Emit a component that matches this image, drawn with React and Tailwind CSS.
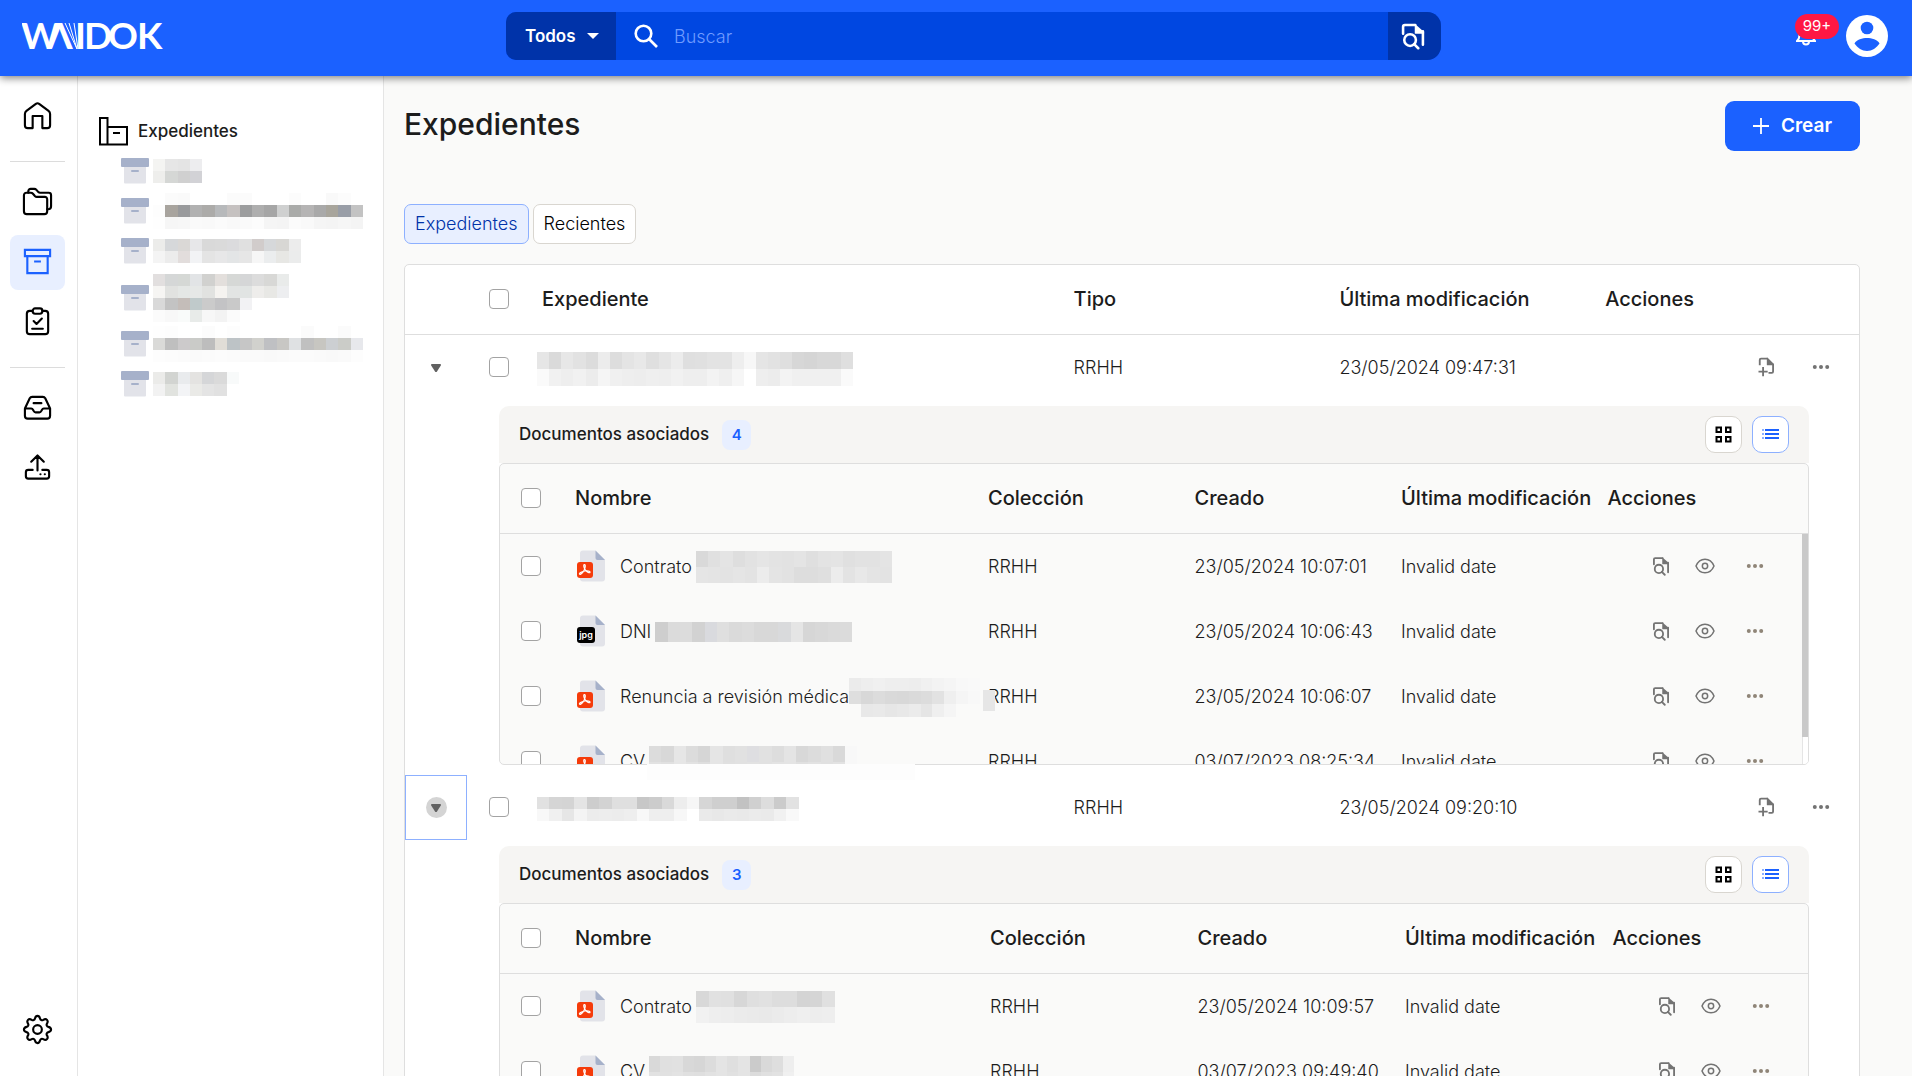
import React, { useState } from 'react'

const TREE = [
    { size: 'h-10', width: 'w-[49px]', rows: ['f4f4f2 e6e6e6 e4e4e4 ededef', 'eeeeec d5d7d5 d0d0d0 d2d2d6'] },
    {
        size: 'h-10', width: 'w-[210px]', rows: [
            '- fb fa - - - fb fb - - - fc - - f9 fc -',
            'fd a8a49e 999a9c b1 acaba9 b7b9bb c5c1c0 9c9d9e ae a6 cfd0d0 aaaba9 b5b4b4 a9 a8a59c 999ea7 c3',
            'fe f6 f7 fa f9 fb f9 fa fc f5 f4 fb f9 f5 f4 f6 f4',
        ],
    },
    { size: 'h-10', width: 'w-[148px]', rows: ['ececea d6d8da dad8d6 e7e7e9 d9 dadada dbdbdd e0 d1cccb d6d8da d8d7d4 ececec', 'f4f4f4 ececec e2dddc f2f3f5 e4 e7e7e8 e3e5e6 e6 f6 ebedee e7e7e4 ebecec'] },
    {
        size: 'h-[53px]', width: 'w-[136px]', rows: [
            'e2dfdf d5d7d7 d5d8d5 e2e4e6 d1d1cf e3dfdc d6d8d6 d5d6d7 dc d8d8d6 e9ebea',
            'f6f5f3 e1e2e0 e4e7e5 e6e8e7 e1e2e0 f5f3f0 e2e4e3 e1e4e3 eeedeb e8e8e5 edeef0',
            'd9d9d9 c3 c4bdb9 c0cacb cb c3c3c5 c9 f2f2f4 - - -',
            'fb f8 f9fbfa e8ebe9 f7 f3 fb - - - -',
        ],
    },
    {
        size: 'h-10', width: 'w-[210px]', rows: [
            'fe fd - - fc - fd - - - - - fb - - fb -',
            'dadad8 bf cccacb cacbc8 bd e0ddd7 bdc3c6 c6 d1d1cd bfc0c3 c8c7c4 dfe1e3 c0 c7c6c1 cccfd2 cbccc8 e7e8ec',
            'fd fc fb fa fb fc fb fa fa f9 fa fb fb fa f9 fa fd',
        ],
    },
    { size: 'h-10', width: 'w-[86px]', rows: ['ebebe9 d2d4d1 e9ebed e4e3e1 d5d6d8 dadada f8fafa', 'f2 e1e3df f3f4f6 eaeae7 e4 e1 -'] },
]

const EXPEDIENTES = [
    {
        id: 1,
        tipo: 'RRHH',
        modified: '23/05/2024 09:47:31',
        mosaic: {
            width: 'w-[316px]', cell: 'h-[17px]', rows: [
                'e6 da e7 e2 dc ec dd e4 e8 df e5 ec df e0 e3 e3 ee f7 e5 e2 df d7 d5 d8 d8 df',
                'fa f1 ee f1 ec f5 f0 ee ed ef ee f1 ee ee f3 ef f6 - ee ec f3 f0 f0 f0 f0 fa',
            ],
        },
        scroll: true,
        docs: [
            { name: 'Contrato', kind: 'pdf', created: '23/05/2024 10:07:01', mosaic: { width: 'w-[196px]', cell: 'h-4', rows: ['d9 e0 e4 de e2 e5 e3 e2 e4 df e3 e4 e0 e2 e2 e4', 'e5 e4 e3 e5 e3 ec e4 e2 dd dd df ec e3 e8 e4 e3'] } },
            { name: 'DNI', kind: 'jpg', created: '23/05/2024 10:06:43', mosaic: { width: 'w-[197px]', cell: 'h-5', rows: ['ce db dc d2 d9dade df da dc d8 d8 d9dadc e5 d6 d8 da db'] } },
            {
                name: 'Renuncia a revisión médica', kind: 'pdf', created: '23/05/2024 10:06:07', tight: true, spill: true,
                mosaic: { width: 'w-[131px]', cell: 'h-[13px]', rows: ['eb ee f0 ee ee ed f0 f3 f5 f8 f9', 'de d8 dc d9 d8 da dc e2 ef f5 f8', '- e8 e9 e6 e8 eb e5 ef f5 - -'] },
            },
            { name: 'CV', kind: 'pdf', created: '03/07/2023 08:25:34', mosaic: { width: 'w-[208px]', cell: 'h-4', rows: ['dc d8 e6 dc d6 e5 df e1 dedee1 e1 dd e4 d8 dc e0 d9 f8', 'e2 e0 e6 e2 de e5 e0 e1 e2 e1 e3 e4 e0 e2 e0 e2 f8'] } },
        ],
    },
    {
        id: 2,
        tipo: 'RRHH',
        modified: '23/05/2024 09:20:10',
        focused: true,
        mosaic: {
            width: 'w-[262px]', cell: 'h-3', rows: [
                'e1 d5 d4 e4 cd d3 df df c7 cc d9 ed f6 d6 cf cf c2 d0 dd cb e2',
                'f8 f0 e6 f4 ec ed ec ee f8 ee ee f7 - ea e8 ea e9 eb ea f1 f9',
            ],
        },
        docs: [
            { name: 'Contrato', kind: 'pdf', created: '23/05/2024 10:09:57', mosaic: { width: 'w-[139px]', cell: 'h-4', rows: ['d8 e1 e0 d7 df e1 dd dd d4 d5 e0', 'f1 ee ed eb ea e9 eb ed ef ed ee'] } },
            { name: 'CV', kind: 'pdf', created: '03/07/2023 09:49:40', mosaic: { width: 'w-[145px]', cell: 'h-4', rows: ['d9 e0 e1 d8 d6 dc e4 df e4 cb d9 de ee', 'e2 e1 e3 e0 df e2 e4 e1 e4 dc e0 e2 f0'] } },
            { name: 'DNI', kind: 'jpg', created: '03/07/2023 09:48:12', mosaic: { width: 'w-[145px]', cell: 'h-4', rows: ['d9 e0 e1 d8 d6 dc e4 df e4 cb d9 de ee'] } },
        ],
    },
]

function toColor(c) {
    if (c === '-') return 'transparent'
    return c.length === 2 ? `#${c}${c}${c}` : `#${c}`
}

// Redacted name, drawn as rows of coloured cells
function Mosaic({ width, cell = 'h-3', rows }) {
    return (
        <span aria-hidden="true" className={`flex flex-col shrink-0 ${width}`}>
            {rows.map((row, i) => (
                <span key={i} className={`flex ${cell}`}>
                    {row.split(' ').map((c, j) => (
                        <span key={j} className="flex-1" style={{ backgroundColor: toColor(c) }} />
                    ))}
                </span>
            ))}
        </span>
    )
}

function Icon({ children }) {
    return (
        <svg aria-hidden="true" className="size-[31px] shrink-0" viewBox="0 0 32 32" fill="none" stroke="currentColor" strokeWidth="2.200" strokeLinecap="round" strokeLinejoin="round">
            {children}
        </svg>
    )
}

const HomeIcon = () => (
    <Icon>
        <path d="M3 14.500a4 4 0 0 1 1.600-3.200l9.700-7.300a2.800 2.800 0 0 1 3.400 0l9.700 7.300a4 4 0 0 1 1.600 3.200V26a3 3 0 0 1-3 3h-5V16.500h-10V29H6a3 3 0 0 1-3-3Z" />
    </Icon>
)

const FoldersIcon = () => (
    <Icon>
        <path d="M2 9.500A2.500 2.500 0 0 1 4.500 7H9c1 0 1.700.3 2.300 1l2.200 2.500c.5.500 1 .700 1.700.700h8.300a2.500 2.500 0 0 1 2.500 2.500V26a3 3 0 0 1-3 3H5a3 3 0 0 1-3-3Z" />
        <path d="M6.500 7V5.500A2.500 2.500 0 0 1 9 3h3.600c1 0 1.700.3 2.300 1l2 2.300c.5.500 1 .700 1.700.700h8.900A2.500 2.500 0 0 1 30 9.500V21a3 3 0 0 1-3 3h-1" />
    </Icon>
)

const ArchiveIcon = () => (
    <Icon>
        <path strokeLinejoin="miter" d="M3 4h26v6.500H3ZM5.500 10.500V28h21V10.500M12.500 16h7" strokeLinecap="butt" />
    </Icon>
)

const ClipboardIcon = () => (
    <Icon>
        <path d="M11 5H8a3 3 0 0 0-3 3v18a3 3 0 0 0 3 3h16a3 3 0 0 0 3-3V8a3 3 0 0 0-3-3h-3" />
        <rect x="11" y="2.500" width="10" height="5.500" rx="2.500" />
        <path d="m12 15.500 3 3 5.500-5.500M10.500 23.500h11" />
    </Icon>
)

const InboxIcon = () => (
    <Icon>
        <path d="M3 17v7.500A3 3 0 0 0 6 27.500h20a3 3 0 0 0 3-3V17l-5-10.500A3 3 0 0 0 21.500 5h-11A3 3 0 0 0 8 6.500L3 17h6.500c1 0 1.500.5 2 1.500l.500 1c.5 1 1 1.500 2 1.500h4c1 0 1.500-.500 2-1.500l.500-1c.5-1 1-1.500 2-1.500H29M12 11.500h8" />
    </Icon>
)

const UploadIcon = () => (
    <Icon>
        <path d="M16 19V4M9.500 10 16 3.500l6.500 6.500M11 18.500H6.500A2.500 2.500 0 0 0 4 21v4a2.500 2.500 0 0 0 2.500 2.500h19A2.500 2.500 0 0 0 28 25v-4a2.500 2.500 0 0 0-2.500-2.500H21M19 23h.1M23.500 23h.1" />
    </Icon>
)

const GearIcon = () => (
    <Icon>
        <circle cx="16" cy="16" r="4.500" />
        <path d="M13.400 4.600C13.800 3 14.700 2 16 2s2.200 1 2.600 2.600c.4 1.700 1.900 2.300 3.400 1.400 1.400-.900 2.900-.900 3.800.100s.9 2.400 0 3.800c-.9 1.500-.2 3 1.500 3.400 1.700.5 2.700 1.400 2.700 2.700s-1 2.200-2.700 2.700c-1.700.4-2.400 1.900-1.500 3.400.9 1.400.9 2.800 0 3.800s-2.400 1-3.800.1c-1.500-.9-3-.3-3.400 1.400-.4 1.600-1.300 2.600-2.600 2.600s-2.200-1-2.600-2.600c-.4-1.700-1.900-2.300-3.400-1.400-1.400.9-2.900.9-3.800-.1s-.9-2.400 0-3.800c.9-1.500.2-3-1.500-3.400C3 18.200 2 17.300 2 16s1-2.200 2.700-2.700c1.700-.4 2.400-1.900 1.500-3.400-.9-1.400-.9-2.800 0-3.800s2.400-1 3.800-.1c1.500.9 3 .3 3.400-1.400Z" />
    </Icon>
)

function DocSearchIcon({ size = 'size-5' }) {
    return (
        <svg aria-hidden="true" className={`${size} shrink-0`} viewBox="0 0 24 24" fill="none" stroke="currentColor" strokeWidth="2.200">
            <path d="M3.500 10V4a1.500 1.500 0 0 1 1.500-1.500H14M20.500 8v11.500" strokeLinecap="round" />
            <path d="M13.500 1.500 21.500 8.500V10H14a.500.500 0 0 1-.500-.500V1.500Z" fill="currentColor" stroke="none" />
            <circle cx="9.500" cy="15.500" r="5" />
            <path d="m13 19 3.500 3.500" strokeLinecap="round" />
        </svg>
    )
}

function DocAddIcon() {
    return (
        <svg aria-hidden="true" className="size-5 shrink-0" viewBox="0 0 24 24" fill="none" stroke="currentColor" strokeWidth="2.200">
            <path d="M4.500 10V3.500a1.500 1.500 0 0 1 1.500-1.500H14M20.500 8v9.500a1.500 1.500 0 0 1-1.500 1.500h-4" />
            <path d="M14 1 21.500 8.500V10H13.500a.500.500 0 0 1-.500-.500V1Z" fill="currentColor" stroke="none" />
            <path d="M8.500 12v11M3 17.500h11" />
        </svg>
    )
}

function EyeIcon() {
    return (
        <svg aria-hidden="true" className="size-5 shrink-0" viewBox="0 0 24 24" fill="none" stroke="currentColor" strokeWidth="1.800">
            <path d="M1.200 12C3.500 6.500 7.500 3.800 12 3.800S20.500 6.500 22.800 12C20.500 17.500 16.500 20.200 12 20.200S3.500 17.500 1.200 12Z" strokeLinejoin="round" />
            <circle cx="12" cy="12" r="3.200" />
        </svg>
    )
}

function DotsIcon() {
    return (
        <svg aria-hidden="true" className="size-5 shrink-0" viewBox="0 0 20 20" fill="currentColor">
            <circle cx="3.800" cy="10" r="2" />
            <circle cx="10" cy="10" r="2" />
            <circle cx="16.200" cy="10" r="2" />
        </svg>
    )
}

function FileIcon({ kind }) {
    return (
        <svg aria-hidden="true" className="size-8 shrink-0" viewBox="0 0 32 32">
            <path d="M8 0.500h12.500L30 10V28.500a3 3 0 0 1-3 3H8a3 3 0 0 1-3-3V3.500a3 3 0 0 1 3-3Z" fill="#e2e3e9" />
            <path d="M20.500 0.500 30 10h-7.500a2 2 0 0 1-2-2Z" fill="#a6b1ca" />
            {kind === 'pdf' ? (
                <>
                    <rect x="2" y="12" width="16" height="16" rx="3" fill="#f53b0a" />
                    <path d="M9.300 14.700c1.600-.3 1 3.200-.200 5.500-1.300 2.500-3.800 5-4.600 4-.8-1.100 3-2.900 5.500-3.200 2.400-.4 5.300 0 5 1.300-.3 1.200-3-.300-4.500-2.200-1.400-1.700-2.400-5.200-1.200-5.400Z" fill="none" stroke="#fff" strokeWidth="1.200" />
                </>
            ) : (
                <>
                    <rect x="2" y="12" width="18" height="16" rx="3" fill="#000" />
                    <text x="11" y="23" textAnchor="middle" fontFamily="Inter, sans-serif" fontSize="9" fontWeight="600" fill="#fff">jpg</text>
                </>
            )}
        </svg>
    )
}

function BoxIcon() {
    return (
        <svg aria-hidden="true" className="w-7 h-[26px] shrink-0" viewBox="0 0 28 26">
            <path d="M3 9h22v15.500a1 1 0 0 1-1 1H4a1 1 0 0 1-1-1Z" fill="#e2e3e9" />
            <rect width="28" height="9" rx="1" fill="#a6b1ca" />
            <rect x="10" y="12" width="8" height="2" rx="1" fill="#a6b1ca" />
        </svg>
    )
}

function Checkbox({ label }) {
    return (
        <input
            type="checkbox"
            aria-label={label}
            className="block size-5 shrink-0 appearance-none rounded-[4px] border border-[#a3a3a3] bg-white checked:bg-[#1b61ff]"
        />
    )
}

function Logo() {
    return (
        <svg role="img" aria-label="Waldok" className="w-[150px] h-12" viewBox="0 0 150 48" fill="#fff" fontFamily="Lato, sans-serif" fontSize="37" fontWeight="700">
            <text y="37" x="-1 25 53 62 86 115">WΛIDOK</text>
            <path d="M43 11 55 37M47 11l8 26M52 11l4 26" stroke="#fff" strokeWidth="1" />
        </svg>
    )
}

function Header() {
    return (
        <header className="relative z-10 flex h-[76px] shrink-0 items-center bg-[#1b61ff] pb-1 text-white shadow-[0_2px_8px_rgba(0,0,0,0.5)]">
            <a href="#" className="w-[506px] pl-[22px]"><Logo /></a>
            <div className="flex h-12 flex-1 overflow-hidden rounded-l-[10px] rounded-r-[14px] bg-[#0047e1]">
                <div className="relative w-[110px] bg-[#0033a9]">
                    <select aria-label="Ámbito de búsqueda" className="size-full appearance-none pl-[19px] pt-[2px] text-[17px] font-semibold outline-none">
                        <option>Todos</option>
                    </select>
                    <svg aria-hidden="true" className="pointer-events-none absolute right-[17px] top-[21px] w-3 h-[6px]" viewBox="0 0 12 6" fill="currentColor"><path d="M0 0h12L6 6Z" /></svg>
                </div>
                <label className="flex flex-1 items-center">
                    <svg aria-hidden="true" className="ml-[18px] size-6" viewBox="0 0 24 24" fill="none" stroke="currentColor" strokeWidth="2.600">
                        <circle cx="9.500" cy="9.500" r="7.800" />
                        <path d="m15 15 8 8" />
                    </svg>
                    <input type="search" aria-label="Buscar" placeholder="Buscar" className="ml-4 h-full flex-1 bg-transparent text-lg font-light outline-none placeholder:text-[#6f9bff]" />
                </label>
                <button aria-label="Búsqueda avanzada" className="flex w-[53px] items-center justify-center bg-[#0033a9] pr-1">
                    <DocSearchIcon size="size-7" />
                </button>
            </div>
            <div className="flex w-[471px] items-center justify-end gap-[30px] pr-6">
                <button aria-label="Notificaciones" className="relative size-5">
                    <svg aria-hidden="true" className="size-5" viewBox="0 0 20 20" fill="none" stroke="currentColor" strokeWidth="2">
                        <path d="M1 15h18c-1.500-1.500-2.500-3-2.500-6a6.500 6.500 0 0 0-13 0c0 3-1 4.500-2.500 6ZM7 15.500c0 2 1.500 3 3 3s3-1 3-3" />
                    </svg>
                    <span className="absolute -left-px -top-3 flex h-[25px] w-[44px] items-center justify-center rounded-full bg-[#ff1744] text-[15px]">99+</span>
                </button>
                <button aria-label="Cuenta" className="size-[42px]">
                    <svg aria-hidden="true" className="size-full" viewBox="0 0 42 42">
                        <circle cx="21" cy="21" r="21" fill="#fff" />
                        <circle cx="21" cy="13" r="6.300" fill="#1b61ff" />
                        <path d="M8.500 28.500c2-4 8-5.500 12.500-5.500s10.500 1.500 12.500 5.500c-3 4.500-7.500 7.500-12.500 7.500s-9.500-3-12.500-7.500Z" fill="#1b61ff" />
                    </svg>
                </button>
            </div>
        </header>
    )
}

function RailButton({ label, active, children }) {
    return (
        <a
            href="#"
            aria-label={label}
            className={`flex size-[55px] items-center justify-center rounded-lg pr-px pb-[2px] ${active ? 'bg-[#e8efff] text-[#1b61ff]' : 'text-black'}`}
        >
            {children}
        </a>
    )
}

function Rail() {
    return (
        <nav className="flex w-[78px] shrink-0 flex-col gap-[5px] border-r border-[#e5e5e5] bg-white pt-[13px] pb-[18px] pl-[10px]">
            <RailButton label="Inicio"><HomeIcon /></RailButton>
            <hr className="mt-3 mb-2 w-[55px] border-[#dcdcdc]" />
            <RailButton label="Documentos"><FoldersIcon /></RailButton>
            <RailButton label="Expedientes" active><ArchiveIcon /></RailButton>
            <RailButton label="Tareas"><ClipboardIcon /></RailButton>
            <hr className="mt-3 mb-2 w-[55px] border-[#dcdcdc]" />
            <RailButton label="Bandeja"><InboxIcon /></RailButton>
            <RailButton label="Subir"><UploadIcon /></RailButton>
            <div className="mt-auto">
                <RailButton label="Ajustes"><GearIcon /></RailButton>
            </div>
        </nav>
    )
}

function TreePanel() {
    return (
        <aside className="w-[306px] shrink-0 border-r border-[#e5e5e5] bg-white pt-[35px] pl-[21px]">
            <div className="flex h-10 items-center gap-[10px]">
                <svg aria-hidden="true" className="size-[29px]" viewBox="0 0 29 29" fill="none" stroke="#000" strokeWidth="2">
                    <path d="M1 1h7.500v26.500H1ZM8.500 10h19.500v17.500H8.500ZM14 16h7" />
                </svg>
                <span className="pt-[2px] text-[17px] font-medium">Expedientes</span>
            </div>
            <ul className="pl-[22px]">
                {TREE.map((item, i) => (
                    <li key={i} className={`flex items-center gap-1 ${item.size}`}>
                        <BoxIcon />
                        <Mosaic width={item.width} rows={item.rows} />
                    </li>
                ))}
            </ul>
        </aside>
    )
}

const DOC_GRID = 'grid grid-cols-[63px_2fr_1fr_1fr_1fr_1fr] items-center'
const EXP_GRID = 'grid grid-cols-[62px_63px_2fr_1fr_1fr_1fr] items-center'

function DocRow({ doc }) {
    return (
        <tr className={`${DOC_GRID} h-[65px] pb-px`}>
            <td className="pl-[21px]"><Checkbox label={`Seleccionar ${doc.name}`} /></td>
            <td className="flex min-w-0 items-center pl-3 whitespace-nowrap">
                <FileIcon kind={doc.kind} />
                <span className={`flex items-center pl-[13px] pt-[2px] ${doc.tight ? '' : 'gap-1'}`}>
                    {doc.name}
                    <Mosaic {...doc.mosaic} />
                </span>
            </td>
            <td className="relative pt-[2px] pl-3">
                RRHH
                {doc.spill && <span className="absolute left-[7px] top-[9px] h-[21px] w-3 bg-[#e6e6e6]" />}
            </td>
            <td className="pt-[2px] pl-3 whitespace-nowrap">{doc.created}</td>
            <td className="pt-[2px] pl-3">Invalid date</td>
            <td className="flex items-center justify-end pr-[37px] text-[#737373]">
                <button aria-label="Vista previa" className="mr-6"><DocSearchIcon /></button>
                <button aria-label="Ver" className="mr-[30px]"><EyeIcon /></button>
                <button aria-label="Más acciones" className="text-[#8f8578]"><DotsIcon /></button>
            </td>
        </tr>
    )
}

function DocsPanel({ docs, count, scroll }) {
    const [view, setView] = useState('list')
    const viewBtn = 'flex size-[37px] items-center justify-center rounded-[10px] border bg-white'
    return (
        <div className="relative mt-[6px] mr-[50px] mb-[10px] ml-[94px]">
            <div className="flex h-[57px] items-center rounded-t-[10px] bg-[#f6f5f3] pr-5 pl-5">
                <h2 className="text-[17px] font-medium text-[#1c1c1c]">Documentos asociados</h2>
                <span className="ml-[13px] flex h-[30px] w-[29px] items-center justify-center rounded-lg bg-[#e8efff] text-[15px] font-semibold text-[#1b61ff]">{count}</span>
                <div className="ml-auto flex gap-[10px]">
                    <button aria-label="Cuadrícula" onClick={() => setView('grid')} className={`${viewBtn} ${view === 'grid' ? 'border-[#8db0ff] text-[#1b61ff]' : 'border-[#d9d6d0] text-black'}`}>
                        <svg aria-hidden="true" className="size-[17px]" viewBox="0 0 17 17" fill="none" stroke="currentColor" strokeWidth="2">
                            <path d="M1.500 1.500H6V6H1.500ZM11 1.500h4.500V6H11ZM1.500 11H6v4.500H1.500ZM11 11h4.500v4.500H11Z" />
                        </svg>
                    </button>
                    <button aria-label="Lista" onClick={() => setView('list')} className={`${viewBtn} ${view === 'list' ? 'border-[#8db0ff] text-[#1b61ff]' : 'border-[#d9d6d0] text-black'}`}>
                        <svg aria-hidden="true" className="size-[17px]" viewBox="0 0 17 17" fill="none" stroke="currentColor" strokeWidth="2">
                            <path d="M3 4h14M3 8h14M3 12h14" />
                            <path d="M0 4h2M0 8h2M0 12h2" opacity="0.500" />
                        </svg>
                    </button>
                </div>
            </div>
            <div className={`relative overflow-hidden rounded-[5px] border border-[#dedede] bg-[#fafaf9] ${scroll ? 'h-[302px]' : ''}`}>
                <table className="block">
                    <thead className="block border-b border-[#dedede]">
                        <tr className={`${DOC_GRID} h-[69px] pb-px text-left text-xl text-[#1c1c1c] ${scroll ? 'mr-[6px]' : ''}`}>
                            <th className="pl-[21px]"><Checkbox label="Seleccionar todos los documentos" /></th>
                            <th className="pl-3 font-medium">Nombre</th>
                            <th className="pl-3 font-medium">Colección</th>
                            <th className="pl-3 font-medium">Creado</th>
                            <th className="pl-3 font-medium whitespace-nowrap">Última modificación</th>
                            <th className="pl-3 font-medium">Acciones</th>
                        </tr>
                    </thead>
                    <tbody className={`block ${scroll ? 'mr-[6px]' : ''}`}>
                        {docs.map((doc) => <DocRow key={doc.created} doc={doc} />)}
                    </tbody>
                </table>
                {scroll && (
                    <div className="absolute top-[70px] right-0 bottom-0 w-[6px] border-l border-[#e5e5e5] bg-white">
                        <div className="-ml-px h-[203px] bg-[#c9c9c9]" />
                    </div>
                )}
            </div>
            {scroll && <div className="absolute top-[358px] left-[148px] h-4 w-[268px] bg-[#fdfdfd]" />}
        </div>
    )
}

function Expediente({ item }) {
    const [open, setOpen] = useState(true)
    return (
        <>
            <tr className={`${EXP_GRID} relative h-[65px] pb-px`}>
                <td className={`-mb-px flex h-[65px] items-center justify-center ${item.focused ? 'border border-[#8db0ff]' : ''}`}>
                    <button
                        aria-label="Desplegar"
                        aria-expanded={open}
                        onClick={() => setOpen(!open)}
                        className={`flex size-[21px] items-center justify-center rounded-full ${item.focused ? 'bg-[#d4d4d4]' : ''}`}
                    >
                        <svg aria-hidden="true" className="w-[10px] h-2" viewBox="0 0 10 8" fill="#616161"><path d="M1 0h8a1 1 0 0 1 .8 1.500L6 7.500a1.200 1.200 0 0 1-2 0L.2 1.500A1 1 0 0 1 1 0Z" /></svg>
                    </button>
                </td>
                <td className="pl-[22px]"><Checkbox label={`Seleccionar expediente ${item.id}`} /></td>
                <td className="pt-1 pl-[7px]"><Mosaic {...item.mosaic} /></td>
                <td className="pt-[2px] pl-3">{item.tipo}</td>
                <td className="pt-[2px] pl-3 whitespace-nowrap">{item.modified}</td>
                <td className="flex items-center justify-end gap-[35px] pr-7 text-[#737373]">
                    <button aria-label="Añadir documento"><DocAddIcon /></button>
                    <button aria-label="Más acciones"><DotsIcon /></button>
                </td>
            </tr>
            {open && (
                <tr className="block">
                    <td className="block">
                        <DocsPanel docs={item.docs} count={item.docs.length} scroll={item.scroll} />
                    </td>
                </tr>
            )}
        </>
    )
}

export default function App() {
    const [tab, setTab] = useState('Expedientes')
    return (
        <div className="flex h-screen flex-col overflow-hidden bg-[#fafaf9] font-['Inter',sans-serif] text-[#1c1c1c]">
            <Header />
            <div className="flex min-h-0 flex-1">
                <Rail />
                <TreePanel />
                <main className="min-w-0 flex-1 overflow-hidden pt-[25px] pr-[52px] pl-5">
                    <div className="flex items-start justify-between">
                        <h1 className="text-[30px] leading-[46px] font-medium">Expedientes</h1>
                        <button className="flex h-[50px] w-[135px] items-center justify-center gap-3 rounded-[9px] bg-[#1b61ff] text-[19px] font-semibold text-white">
                            <svg aria-hidden="true" className="size-4" viewBox="0 0 16 16" stroke="currentColor" strokeWidth="1.800"><path d="M8 0v16M0 8h16" /></svg>
                            Crear
                        </button>
                    </div>
                    <div role="tablist" className="mt-[53px] flex gap-1">
                        {['Expedientes', 'Recientes'].map((t) => (
                            <button
                                key={t}
                                role="tab"
                                aria-selected={tab === t}
                                onClick={() => setTab(t)}
                                className={`h-10 rounded-[7px] border px-[10px] text-lg font-light ${tab === t ? 'border-[#8db0ff] bg-[#e8efff] text-[#0033a9]' : 'border-[#d9d6d0] bg-white text-black'}`}
                            >
                                {t}
                            </button>
                        ))}
                    </div>
                    <div className="mt-5 rounded-[5px] border border-[#dedede] bg-white">
                        <table className="block">
                            <thead className="block border-b border-[#dedede]">
                                <tr className={`${EXP_GRID} h-[69px] pb-px text-left text-xl`}>
                                    <th />
                                    <th className="pl-[22px]"><Checkbox label="Seleccionar todos los expedientes" /></th>
                                    <th className="pl-3 font-medium">Expediente</th>
                                    <th className="pl-3 font-medium">Tipo</th>
                                    <th className="pl-3 font-medium whitespace-nowrap">Última modificación</th>
                                    <th className="pl-3 font-medium">Acciones</th>
                                </tr>
                            </thead>
                            <tbody className="block text-lg font-light text-[#1c1c1c]">
                                {EXPEDIENTES.map((item) => <Expediente key={item.id} item={item} />)}
                            </tbody>
                        </table>
                    </div>
                </main>
            </div>
        </div>
    )
}
